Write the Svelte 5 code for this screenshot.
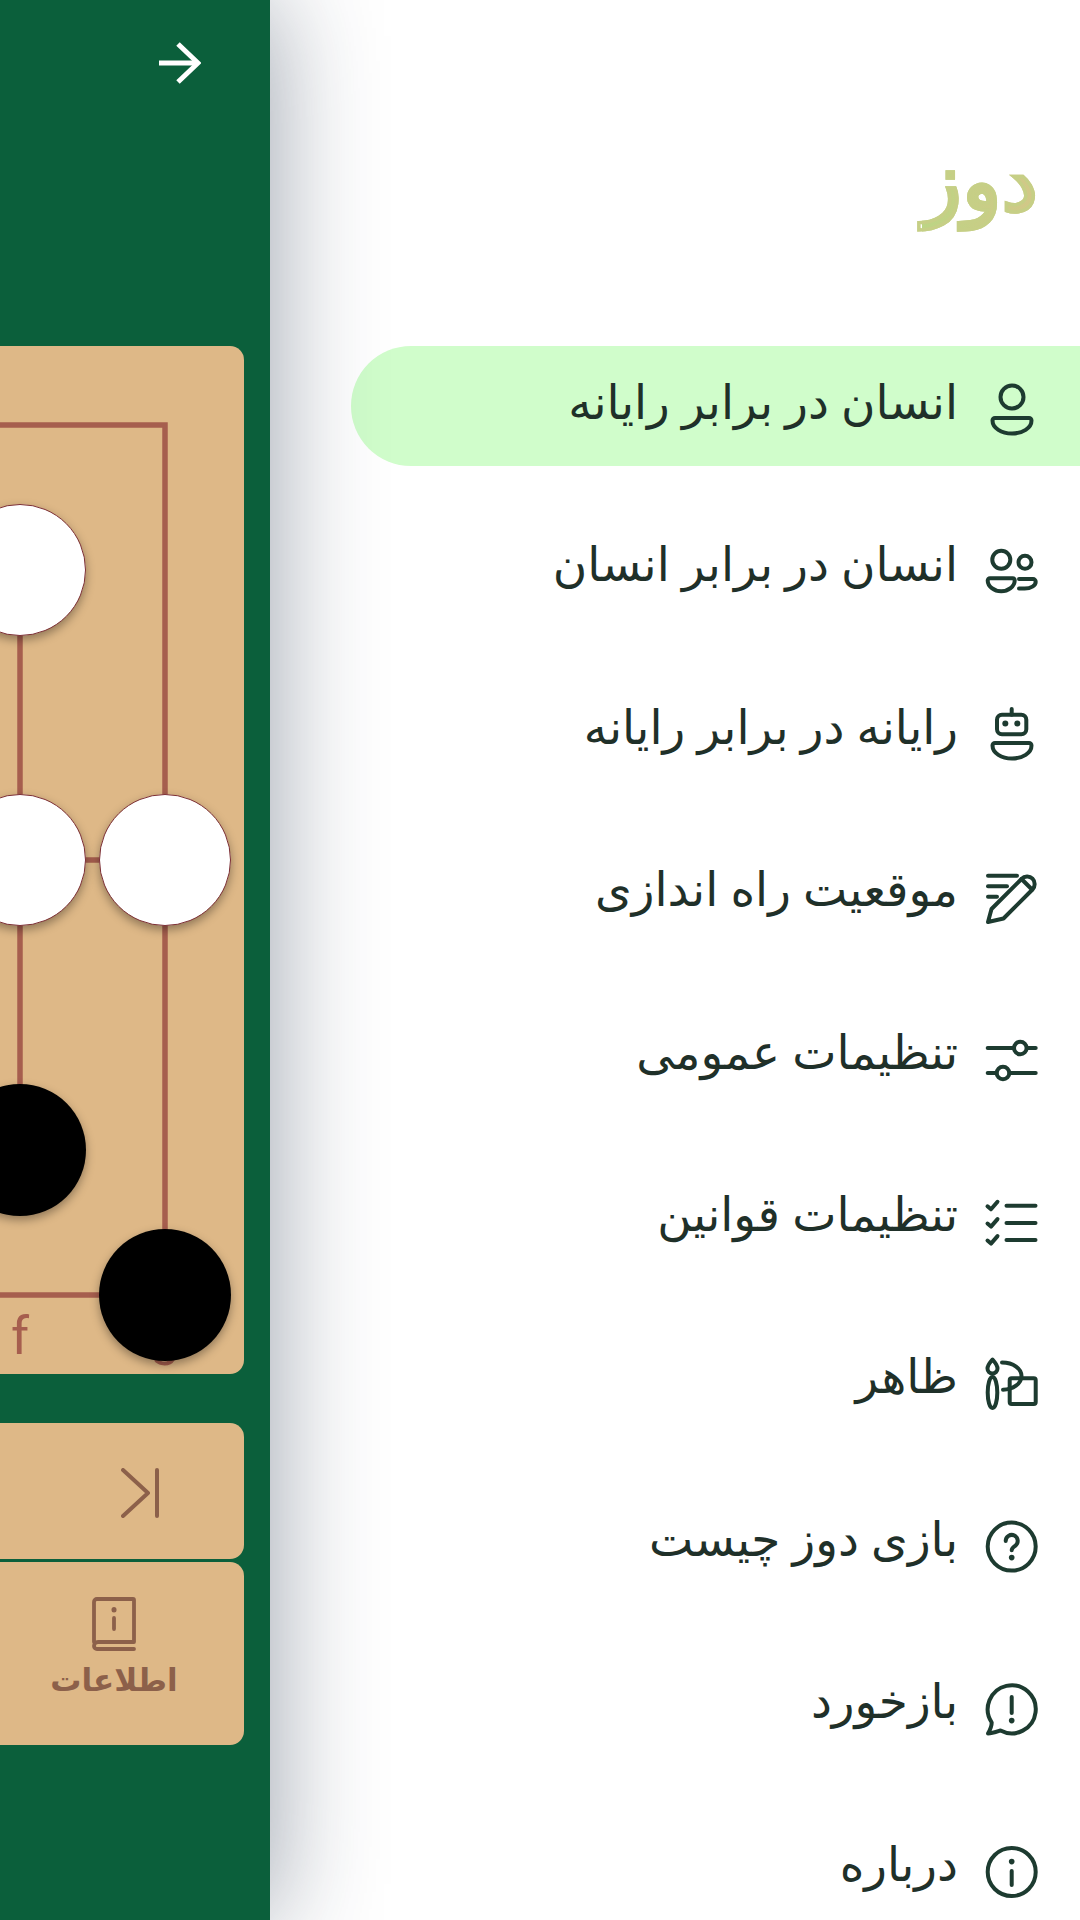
<script lang="ts">
	const circle = (cx: number, cy: number, r: number) =>
		`M${cx - r} ${cy}a${r} ${r} 0 1 0 ${r * 2} 0a${r} ${r} 0 1 0 ${-r * 2} 0z`;
	const body = 'M13 38h34a2.5 2.5 0 0 1 2.5 2.5c0 7.500-9 13-19.500 13s-19.500-5.500-19.500-13a2.500 2.500 0 0 1 2.500-2.500z';

	const menu = [
		{ label: 'انسان در برابر رایانه', active: true, paths: [circle(30, 17, 11.5), body] },
		{
			label: 'انسان در برابر انسان',
			paths: [
				circle(19.3, 17.7, 9),
				circle(43, 20.3, 6.5),
				'M8 36.300h22.500a2.300 2.300 0 0 1 2.200 2.300c0 6-6.500 10.700-13.500 10.700s-13.500-4.700-13.500-10.700a2.300 2.300 0 0 1 2.300-2.300z',
				'M37 37h14a2.700 2.700 0 0 1 2.700 2.700c0 4-5 6.800-11 6.800h-5.700'
			]
		},
		{
			label: 'رایانه در برابر رایانه',
			paths: ['M20 9.800h19.300a5 5 0 0 1 5 5v9.400a5 5 0 0 1-5 5h-19.300a5 5 0 0 1-5-5v-9.400a5 5 0 0 1 5-5z', 'M29.700 4v5.800', body],
			fills: [circle(23.3, 18.500, 3), circle(35.3, 18.500, 3)]
		},
		{
			label: 'موقعیت راه اندازی',
			paths: [
				'M6 8.700h29',
				'M6 19.300h19',
				'M6 29.700h9',
				'M6 55l3.500-13L39.500 12c3-3 8-3.300 11-.3s2.700 8 0 10.800L21.500 51.500z',
				'M39.500 12l10.500 10.500'
			]
		},
		{
			label: 'تنظیمات عمومی',
			paths: ['M5.700 18h26', 'M45 18h8.700', 'M5.700 43h8.800', 'M27.500 43h26.200', circle(38.3, 18, 6.3), circle(21, 43, 6.3)]
		},
		{
			label: 'تنظیمات قوانین',
			paths: [
				'M24.500 13.700h29', 'M24.500 31h29', 'M24.500 48h29',
				'M5.500 14.300l3.500 3 6.500-7.500', 'M5.500 31.600l3.500 3 6.500-7.500', 'M5.500 48.600l3.500 3 6.500-7.500'
			]
		},
		{
			label: 'ظاهر',
			paths: [
				'M10.500 5.500c-2.500 3-5 5.500-5 9a5 5 0 0 0 10 0c0-3.500-2.500-6-5-9z',
				'M10.500 23c-2.800 0-4.800 7-4.800 15.500s2 15.500 4.800 15.500 4.800-7 4.800-15.500-2-15.500-4.800-15.500z',
				'M29.700 24.300h22a2 2 0 0 1 2 2V48a2 2 0 0 1-2 2h-22a2 2 0 0 1-2-2V26.300a2 2 0 0 1 2-2z',
				'M20 8.600c11.500 0 19.500 6 19.500 13.500S31 35.700 21 35.700'
			]
		},
		{
			label: 'بازی دوز چیست',
			paths: [circle(29.7, 29.6, 24), 'M23.700 24a6 6 0 1 1 9.500 4.800c-2 1.400-3.500 2.400-3.500 4.500'],
			fills: [circle(29.7, 40.6, 2.8)]
		},
		{
			label: 'بازخورد',
			paths: ['M9.700 43.500A24 24 0 1 1 18.500 51.500C14 53 10 54.500 6 54.500c2-3.500 3.700-7 3.700-11z', 'M29.700 18v16'],
			fills: [circle(29.7, 41.6, 2.8)]
		},
		{
			label: 'درباره',
			paths: [circle(29.7, 30, 24), 'M29.700 29v14'],
			fills: [circle(29.7, 19.600, 2.8)]
		}
	];

	const stones = [
		{ x: 804, y: 224, color: 'white' },
		{ x: 804, y: 514, color: 'white' },
		{ x: 949, y: 514, color: 'white' },
		{ x: 804, y: 804, color: 'black' },
		{ x: 949, y: 949, color: 'black' }
	];
	// only the last two column letters are inside the visible part of the board
	const files = [
		{ name: 'f', x: 804 },
		{ name: 'g', x: 949 }
	];
</script>

<div class="screen">
	<section class="game">
		<div class="page">
			<header class="bar">
				<svg class="back" viewBox="0 0 42 42" fill="none" stroke="#fff" stroke-width="5">
					<path d="M0 21h38" />
					<path d="M19 2l20 19-20 19" />
				</svg>
			</header>

			<div class="board">
				<svg class="lines" viewBox="0 0 1028 1028" fill="none" stroke="#a65e4e" stroke-width="5.500">
					<rect x="79" y="79" width="870" height="870" />
					<rect x="224" y="224" width="580" height="580" />
					<rect x="369" y="369" width="290" height="290" />
					<path d="M514 79V369M514 659V949M79 514H369M659 514H949" />
				</svg>
				{#each files as file}
					<span class="file" style="left: {file.x}px">{file.name}</span>
				{/each}
				{#each stones as stone}
					<div class="stone {stone.color}" style="left: {stone.x}px; top: {stone.y}px"></div>
				{/each}
			</div>

			<div class="card controls">
				<svg class="skip" viewBox="0 0 40 50" fill="none" stroke="#8c604a" stroke-width="4" stroke-linecap="round" stroke-linejoin="round">
					<path d="M2 2l25 23L2 48" />
					<path d="M36 2v46" />
				</svg>
			</div>

			<div class="card tools">
				<button class="tool">
					<svg viewBox="0 0 44 54" fill="none" stroke="#8c604a" stroke-width="3.800" stroke-linecap="round" stroke-linejoin="round">
						<path d="M2 45V5a3 3 0 0 1 3-3h36a1 1 0 0 1 1 1v42H6a4 4 0 0 0-4 4 3 3 0 0 0 3 3h37" />
						<path d="M22 21v11" />
						<path d="M22 12.500v.5" stroke-width="5" />
					</svg>
					<span>اطلاعات</span>
				</button>
			</div>
		</div>
	</section>

	<nav class="drawer">
		<h1><span>دوز</span></h1>
		<ul>
			{#each menu as item}
				<li class:active={item.active}>
					<svg viewBox="0 0 60 60" fill="none" stroke="#1d3b30" stroke-width="4" stroke-linecap="round" stroke-linejoin="round">
						{#each item.paths as d}
							<path {d} />
						{/each}
						{#each item.fills ?? [] as d}
							<path {d} fill="#1d3b30" stroke="none" />
						{/each}
					</svg>
					<span>{item.label}</span>
				</li>
			{/each}
		</ul>
	</nav>
</div>

<style>
	:global(body) {
		margin: 0;
		background: #fff;
	}
	.screen {
		display: flex;
		width: 1080px;
		height: 1920px;
		overflow: hidden;
		font-family: 'Noto Sans', 'DejaVu Sans', sans-serif;
	}
	.game {
		position: relative;
		z-index: 1;
		flex: 0 0 270px;
		height: 1920px;
		background: #0b5f3b;
		box-shadow: 0 0 110px rgba(25, 40, 65, 0.45);
	}
	.page {
		position: relative;
		width: 270px;
		height: 1920px;
		overflow: hidden;
	}
	.bar {
		display: flex;
		justify-content: flex-end;
		box-sizing: border-box;
		width: 1080px;
		height: 346px;
		margin-left: -810px;
		padding: 42px 69px 0 0;
	}
	.back {
		width: 42px;
		height: 42px;
	}
	.board {
		position: relative;
		width: 1028px;
		height: 1028px;
		margin-left: -784px;
		background: #deb887;
		border-radius: 14px;
	}
	.lines {
		position: absolute;
		inset: 0;
		width: 100%;
		height: 100%;
	}
	.file {
		position: absolute;
		top: 961px;
		width: 60px;
		margin-left: -30px;
		text-align: center;
		font-family: Roboto, sans-serif;
		font-size: 52px;
		line-height: 60px;
		color: #a65e4e;
	}
	.stone {
		position: absolute;
		box-sizing: border-box;
		width: 132px;
		height: 132px;
		margin: -66px 0 0 -66px;
		border-radius: 50%;
		box-shadow: 0 4px 10px rgba(0, 0, 0, 0.35);
	}
	.stone.white {
		background: #fff;
		border: 1.500px solid #7d2f35;
	}
	.stone.black {
		background: #000;
	}
	.card {
		display: flex;
		justify-content: flex-end;
		width: 1028px;
		margin-left: -784px;
		background: #deb887;
		border-radius: 14px;
	}
	.controls {
		box-sizing: border-box;
		height: 136px;
		margin-top: 49px;
		padding: 45px 83px 0 0;
	}
	.skip {
		width: 40px;
		height: 50px;
	}
	.tools {
		height: 183px;
		margin-top: 3px;
	}
	.tool {
		display: flex;
		flex-direction: column;
		align-items: center;
		width: 260px;
		padding: 35px 0 0;
		border: 0;
		background: none;
		color: #8c604a;
		font-family: inherit;
		font-size: 31px;
		font-weight: 700;
	}
	.tool svg {
		width: 44px;
		height: 54px;
	}
	.tool span {
		margin-top: 6px;
		line-height: 44px;
	}
	.drawer {
		flex: 1;
		direction: rtl;
		background: #fff;
	}
	h1 {
		box-sizing: border-box;
		height: 346px;
		margin: 0;
		padding: 108px 42px 0 0;
		font-size: 82px;
		line-height: 100px;
		font-weight: 400;
	}
	h1 span {
		display: inline-block;
		padding: 20px 0 30px;
		background: linear-gradient(90deg, #bcd584, #d3c788);
		-webkit-background-clip: text;
		background-clip: text;
		color: transparent;
		-webkit-text-stroke: 3.500px #c6cf86;
	}
	ul {
		display: flex;
		flex-direction: column;
		gap: 42.400px;
		margin: 0;
		padding: 0;
		list-style: none;
	}
	li {
		display: flex;
		align-items: center;
		gap: 24px;
		height: 120px;
		margin-left: 81px;
		padding-right: 38px;
		border-radius: 60px 0 0 60px;
		color: #1f3029;
		font-size: 47px;
	}
	li.active {
		background: #d0fdcb;
	}
	li svg {
		flex: none;
		width: 60px;
		height: 60px;
		margin-top: 8px;
	}
	li span {
		margin-top: -10px;
	}
</style>
